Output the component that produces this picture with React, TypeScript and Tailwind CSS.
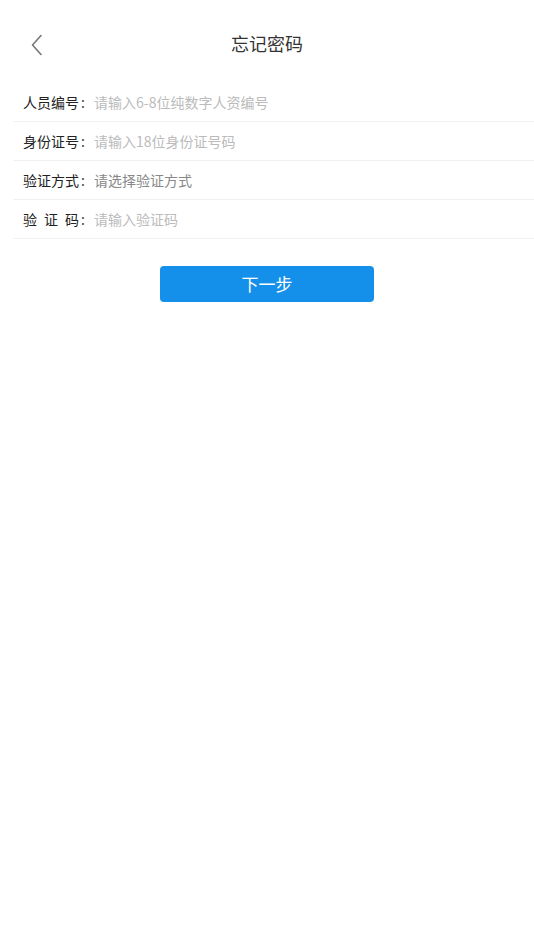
const FONT = { fontFamily: '"Noto Sans CJK SC", "Noto Sans", sans-serif' }

type Field = { label: string; placeholder: string; select?: boolean; spaced?: boolean }

const FIELDS: Field[] = [
  { label: '人员编号', placeholder: '请输入6-8位纯数字人资编号' },
  { label: '身份证号', placeholder: '请输入18位身份证号码' },
  { label: '验证方式', placeholder: '请选择验证方式', select: true },
  { label: '验证码', placeholder: '请输入验证码', spaced: true },
]

function FieldRow({ field }: { field: Field }) {
  return (
    <div className="flex h-[39px] items-center border-b border-[#f1f1f1] pl-[10px]">
      <div className="flex w-[71px] shrink-0 items-center text-[14px] text-[#222]">
        {field.spaced ? (
          <span className="flex w-[56px] justify-between">
            <span>验</span>
            <span>证</span>
            <span>码</span>
          </span>
        ) : (
          <span>{field.label}</span>
        )}
        <span className="ml-[2px] text-[#444]">:</span>
      </div>
      <div className={'text-[14px] ' + (field.select ? 'text-[#888]' : 'text-[#bbb]')}>
        {field.placeholder}
      </div>
    </div>
  )
}

export default function App() {
  return (
    <div className="min-h-[950px] w-full bg-white" style={FONT}>
      <div className="relative flex h-[83px] items-center justify-center pt-[4px]">
        <button className="absolute left-[26px] top-[29px] p-1">
          <svg width="14" height="24" viewBox="0 0 14 24" fill="none">
            <path d="M11 2.5 L2.5 12 L11 21.5" stroke="#777" strokeWidth="1.6" strokeLinecap="round" strokeLinejoin="round" />
          </svg>
        </button>
        <h1 className="text-[18px] font-normal text-[#333]">忘记密码</h1>
      </div>

      <div className="ml-[13px]">
        {FIELDS.map((f) => (
          <FieldRow key={f.label} field={f} />
        ))}
      </div>

      <div className="mt-[27px] flex justify-center">
        <button className="flex h-[36px] w-[214px] items-center justify-center rounded-[4px] bg-[#1590ea] text-[17px] text-white">
          下一步
        </button>
      </div>
    </div>
  )
}
